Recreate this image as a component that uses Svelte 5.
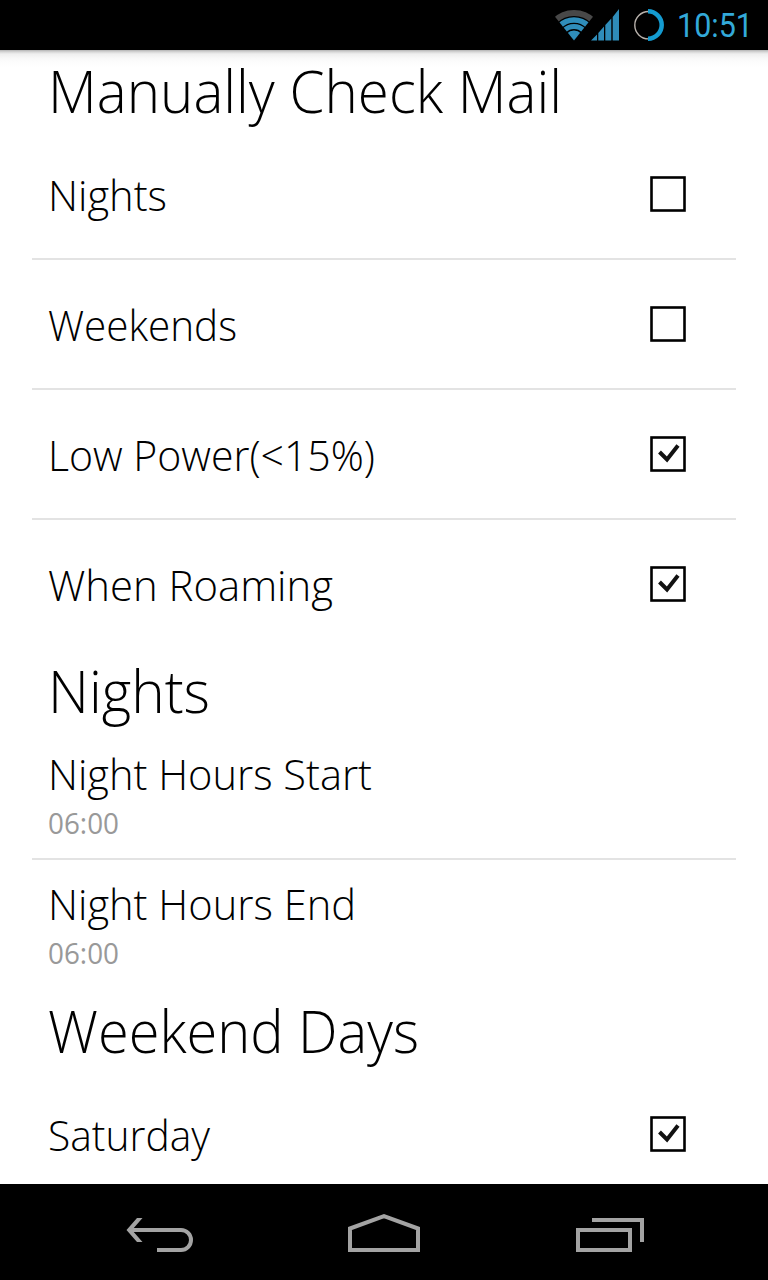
<script lang="ts">
  type Item = { title: string; width: number; value?: string; checked?: boolean };
  type Section = { title: string; width: number; items: Item[] };

  const sections: Section[] = [
    {
      title: 'Manually Check Mail',
      width: 514,
      items: [
        { title: 'Nights', width: 119, checked: false },
        { title: 'Weekends', width: 189, checked: false },
        { title: 'Low Power(<15%)', width: 327, checked: true },
        { title: 'When Roaming', width: 285, checked: true },
      ],
    },
    {
      title: 'Nights',
      width: 162,
      items: [
        { title: 'Night Hours Start', width: 324, value: '06:00' },
        { title: 'Night Hours End', width: 308, value: '06:00' },
      ],
    },
    {
      title: 'Weekend Days',
      width: 371,
      items: [{ title: 'Saturday', width: 162, checked: true }],
    },
  ];
</script>

{#snippet label(text: string, width: number, kind: string)}
  <svg class={kind} width="600" height="1em">
    <text x="0" y="0.8em" textLength={width} lengthAdjust="spacingAndGlyphs">{text}</text>
  </svg>
{/snippet}

<div class="screen">
  <header class="status-bar">
    <svg class="status-icons" width="112" height="34" viewBox="554 8 112 34">
      <clipPath id="fan"><path d="M574 40.500 L552 13 V0 H596 V13 Z" /></clipPath>
      <g fill="none" clip-path="url(#fan)">
        <circle cx="574" cy="40.500" r="27.500" stroke="#484848" stroke-width="6" />
        <circle cx="574" cy="40.500" r="20.500" stroke="#2f8dba" stroke-width="5.600" />
        <circle cx="574" cy="40.500" r="14" stroke="#2f8dba" stroke-width="5" />
        <circle cx="574" cy="40.500" r="5" stroke="#2f8dba" stroke-width="10" />
      </g>
      <path
        d="M591 40.500 L597 34.500 V40.500 Z M598.300 33 L604 26.500 V40.500 H598.300 Z M605.300 25 L611.300 18.500 V40.500 H605.300 Z M612.700 17 L619 9 V40.500 H612.700 Z"
        fill="#2f8dba"
      />
      <path d="M648.500 11.500 A13.700 13.700 0 0 0 648.500 38.900" fill="none" stroke="#b9b2ac" stroke-width="1.400" />
      <path d="M648 11.300 A13.700 13.700 0 0 1 648 38.700" fill="none" stroke="#149bd0" stroke-width="4.500" />
    </svg>
    <svg class="clock" width="76" height="34">
      <text x="0" y="29" textLength="76" lengthAdjust="spacingAndGlyphs">10:51</text>
    </svg>
  </header>

  <main>
    {#each sections as section}
      <section>
        <h2>{@render label(section.title, section.width, 'heading')}</h2>
        {#each section.items as item}
          <div class="row">
            <div class="texts">
              {@render label(item.title, item.width, 'title')}
              {#if item.value}
                {@render label(item.value, 71, 'value')}
              {/if}
            </div>
            {#if item.checked !== undefined}
              <svg class="checkbox" width="36" height="36">
                <rect x="1.500" y="1.500" width="33" height="33" fill="none" stroke="#000" stroke-width="2.600" />
                {#if item.checked}
                  <path d="M9.500 16 L17 23.500 L28 9.500" fill="none" stroke="#111" stroke-width="4" />
                {/if}
              </svg>
            {/if}
          </div>
        {/each}
      </section>
    {/each}
  </main>

  <nav>
    <svg width="768" height="96" viewBox="0 1184 768 96" fill="none" stroke="#a3a3a3" stroke-width="4">
      <path d="M130 1230 H181 A10 10 0 0 1 181 1250 H157" />
      <path d="M126.500 1230 L137 1218 H142.500 L132 1230 L142.500 1242 H137 Z" fill="#a3a3a3" stroke="none" />
      <path d="M350 1250 V1228.500 L384 1216.200 L418 1228.500 V1250 Z" />
      <path d="M592 1220 H642 V1242 M578 1230 H630 V1250 H578 Z" />
    </svg>
  </nav>
</div>

<style>
  :global(body) {
    margin: 0;
  }

  .screen {
    display: flex;
    flex-direction: column;
    width: 768px;
    height: 1280px;
    overflow: hidden;
    background: #fff;
    color: #000;
    font-family: 'Open Sans', 'Noto Sans', sans-serif;
    font-weight: 300;
  }

  .status-bar {
    display: flex;
    flex: none;
    align-items: center;
    justify-content: flex-end;
    gap: 11px;
    box-sizing: border-box;
    height: 50px;
    padding-right: 15px;
    background: #000;
  }

  .clock {
    fill: #33a9d9;
    font: 400 33px Roboto, sans-serif;
  }

  main {
    flex: 1;
    min-height: 0;
    overflow: hidden;
    background: linear-gradient(#b4b4b4 0, #d8d8d8 2px, #efefef 4px, #fafafa 9px, #fff 17px);
  }

  section:first-child {
    margin-top: -2px;
  }

  h2 {
    box-sizing: border-box;
    height: 82px;
    margin: 0;
    padding: 19px 0 0 48px;
  }

  svg {
    display: block;
    overflow: visible;
  }

  .heading {
    font-size: 58px;
    font-weight: 300;
  }

  .title {
    font-size: 43px;
  }

  .value {
    margin-top: 10.5px;
    fill: #999;
    font-size: 30px;
    font-weight: 400;
  }

  .row {
    display: flex;
    align-items: center;
    justify-content: space-between;
    height: 128px;
    margin: 0 32px;
    padding: 0 50px 0 16px;
  }

  .row:not(:last-child) {
    border-bottom: 2px solid #e3e3e3;
  }

  .texts {
    padding-top: 8px;
  }

  nav {
    flex: none;
    height: 96px;
    background: #000;
  }
</style>
